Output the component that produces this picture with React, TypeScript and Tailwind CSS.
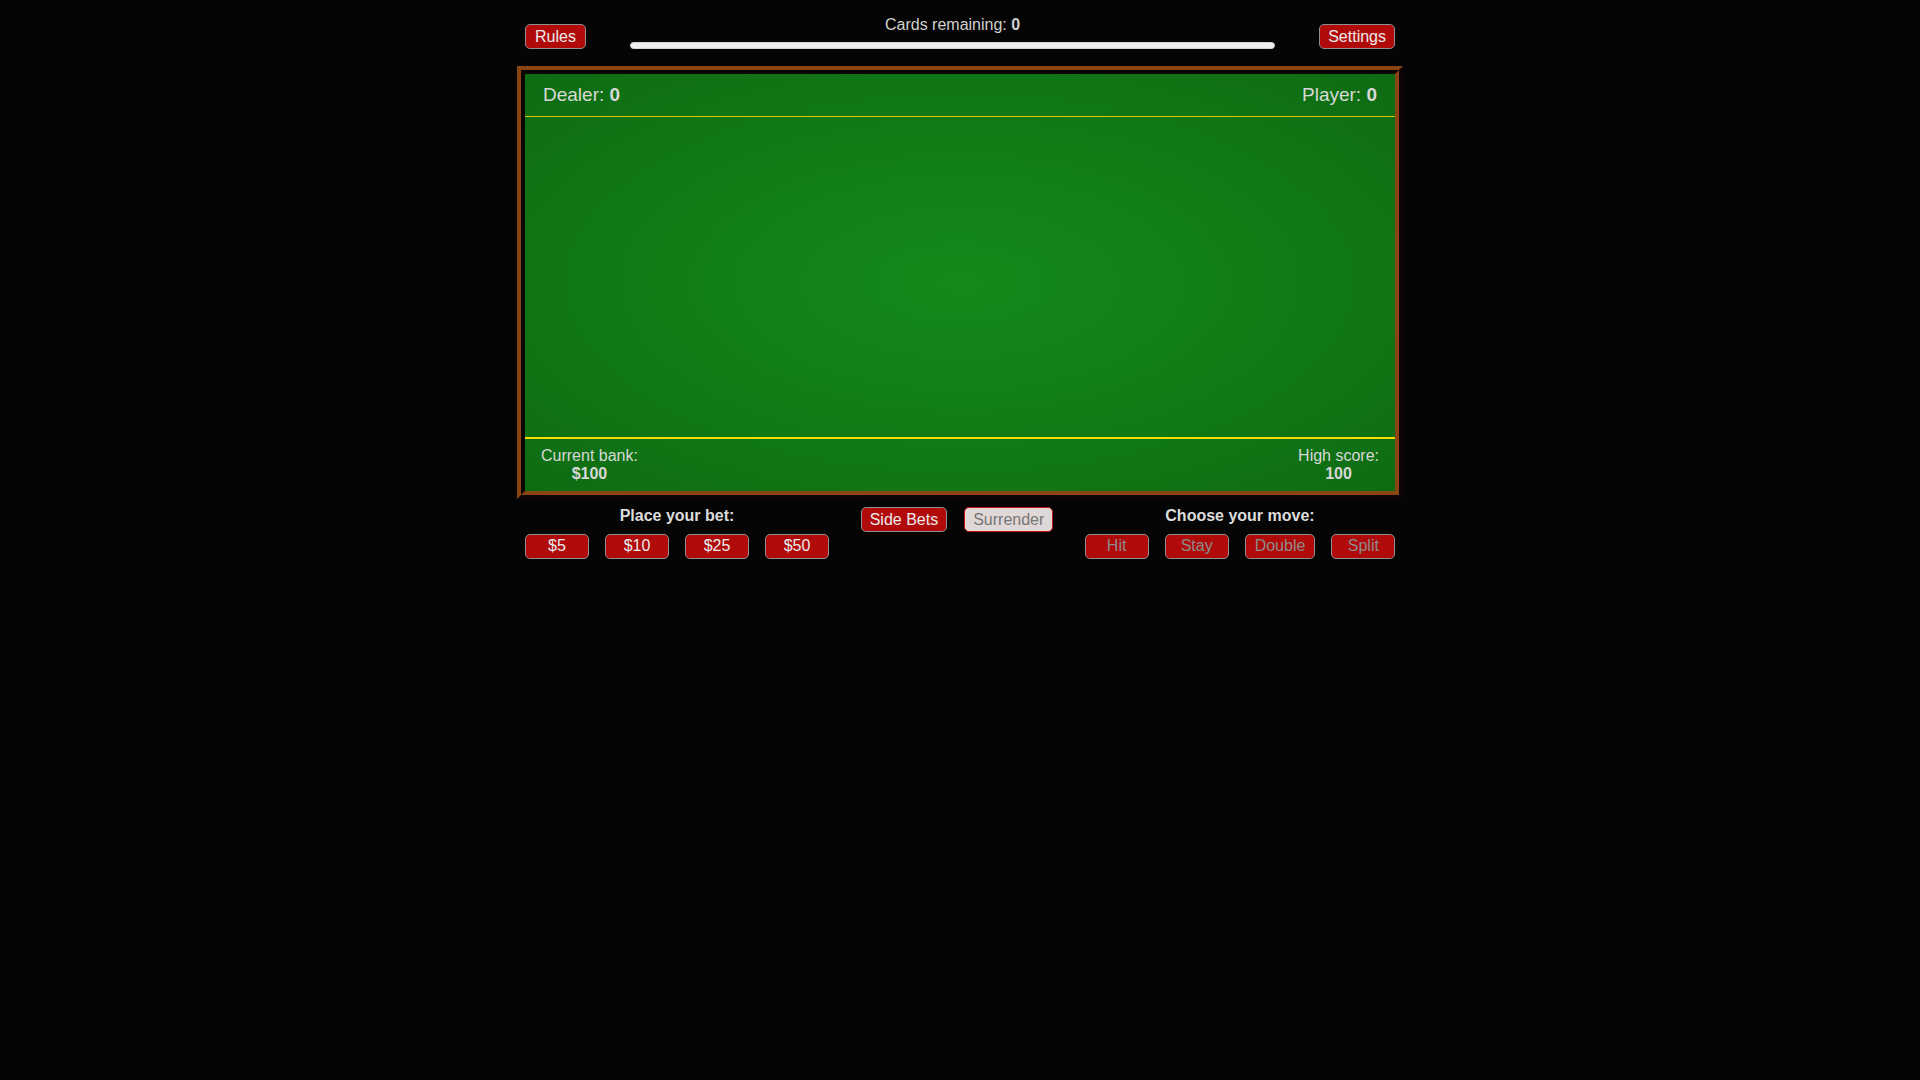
import React from "react";

const btnBase =
  "h-[25px] box-border rounded-[5px] border border-[#8f8f8f] bg-[#b00a0a] text-[16px] leading-none flex items-center justify-center";

function RedButton({
  label,
  disabled,
  cls,
}: {
  label: string;
  disabled?: boolean;
  cls?: string;
}) {
  return (
    <button className={btnBase + " " + (cls ?? "px-2") + (disabled ? " text-[#8c8c8c]" : " text-[#ececec]")}>
      {label}
    </button>
  );
}

export default function App() {
  return (
    <div className="min-h-screen w-full bg-[#050505] font-['Liberation_Sans',Arial,sans-serif] text-[16px]">
      <div className="mx-auto w-[886px] pt-[16px]">
        {/* Top row */}
        <div className="flex items-end px-2">
          <RedButton label="Rules" cls="px-[9px]" />
          <div className="mx-[44px] flex flex-1 flex-col items-center">
            <div className="text-[16px] leading-[18.4px] text-[#d0d0d0]">
              Cards remaining: <span className="font-bold">0</span>
            </div>
            <div className="mt-[8px] h-[7px] w-full rounded-full border border-[#d4d4d4] bg-[#eeeeee]" />
          </div>
          <RedButton label="Settings" />
        </div>

        {/* Table */}
        <div className="mt-[17px] border-4 border-t-[#8b4513] border-l-[#8b4513] border-r-[#0b0603] border-b-[#0b0603]">
          <div className="border-4 border-t-[#0b0603] border-l-[#0b0603] border-r-[#8b4513] border-b-[#8b4513]">
            <div className="bg-[radial-gradient(ellipse_at_center,#15891a_0%,#117a16_55%,#0e6b12_100%)]">
              <div className="flex h-[42px] items-center justify-between px-[18px] text-[19px] text-[#d8d8d8]">
                <div>
                  Dealer: <span className="font-bold">0</span>
                </div>
                <div>
                  Player: <span className="font-bold">0</span>
                </div>
              </div>
              <div className="h-px bg-[#e2c400]" />
              <div className="h-[320px]" />
              <div className="h-[2px] bg-[#f6dc00]" />
              <div className="flex h-[52px] items-start justify-between px-4 pt-[8px] text-[16px] leading-[18px] text-[#d8d8d8]">
                <div className="text-center">
                  <div>Current bank:</div>
                  <div className="font-bold">$100</div>
                </div>
                <div className="text-center">
                  <div>High score:</div>
                  <div className="font-bold">100</div>
                </div>
              </div>
            </div>
          </div>
        </div>

        {/* Bottom controls */}
        <div className="mt-[8px] flex items-start justify-between px-2">
          <div className="flex w-[304px] flex-col items-center">
            <div className="text-[16px] font-bold leading-[18.4px] text-[#dcdcdc]">Place your bet:</div>
            <div className="mt-[8px] flex gap-4">
              <RedButton label="$5" cls="w-16" />
              <RedButton label="$10" cls="w-16" />
              <RedButton label="$25" cls="w-16" />
              <RedButton label="$50" cls="w-16" />
            </div>
          </div>
          <div className="flex gap-[17px]">
            <RedButton label="Side Bets" />
            <button className="flex h-[25px] items-center justify-center rounded-[5px] border border-[#c81414] bg-[#e0d7d7] px-2 text-[16px] leading-none text-[#767676]">
              Surrender
            </button>
          </div>
          <div className="flex w-[310px] flex-col items-center">
            <div className="text-[16px] font-bold leading-[18.4px] text-[#dcdcdc]">Choose your move:</div>
            <div className="mt-[8px] flex gap-4">
              <RedButton label="Hit" disabled cls="w-16" />
              <RedButton label="Stay" disabled cls="w-16" />
              <RedButton label="Double" disabled cls="px-[9px]" />
              <RedButton label="Split" disabled cls="w-16" />
            </div>
          </div>
        </div>
      </div>
    </div>
  );
}
